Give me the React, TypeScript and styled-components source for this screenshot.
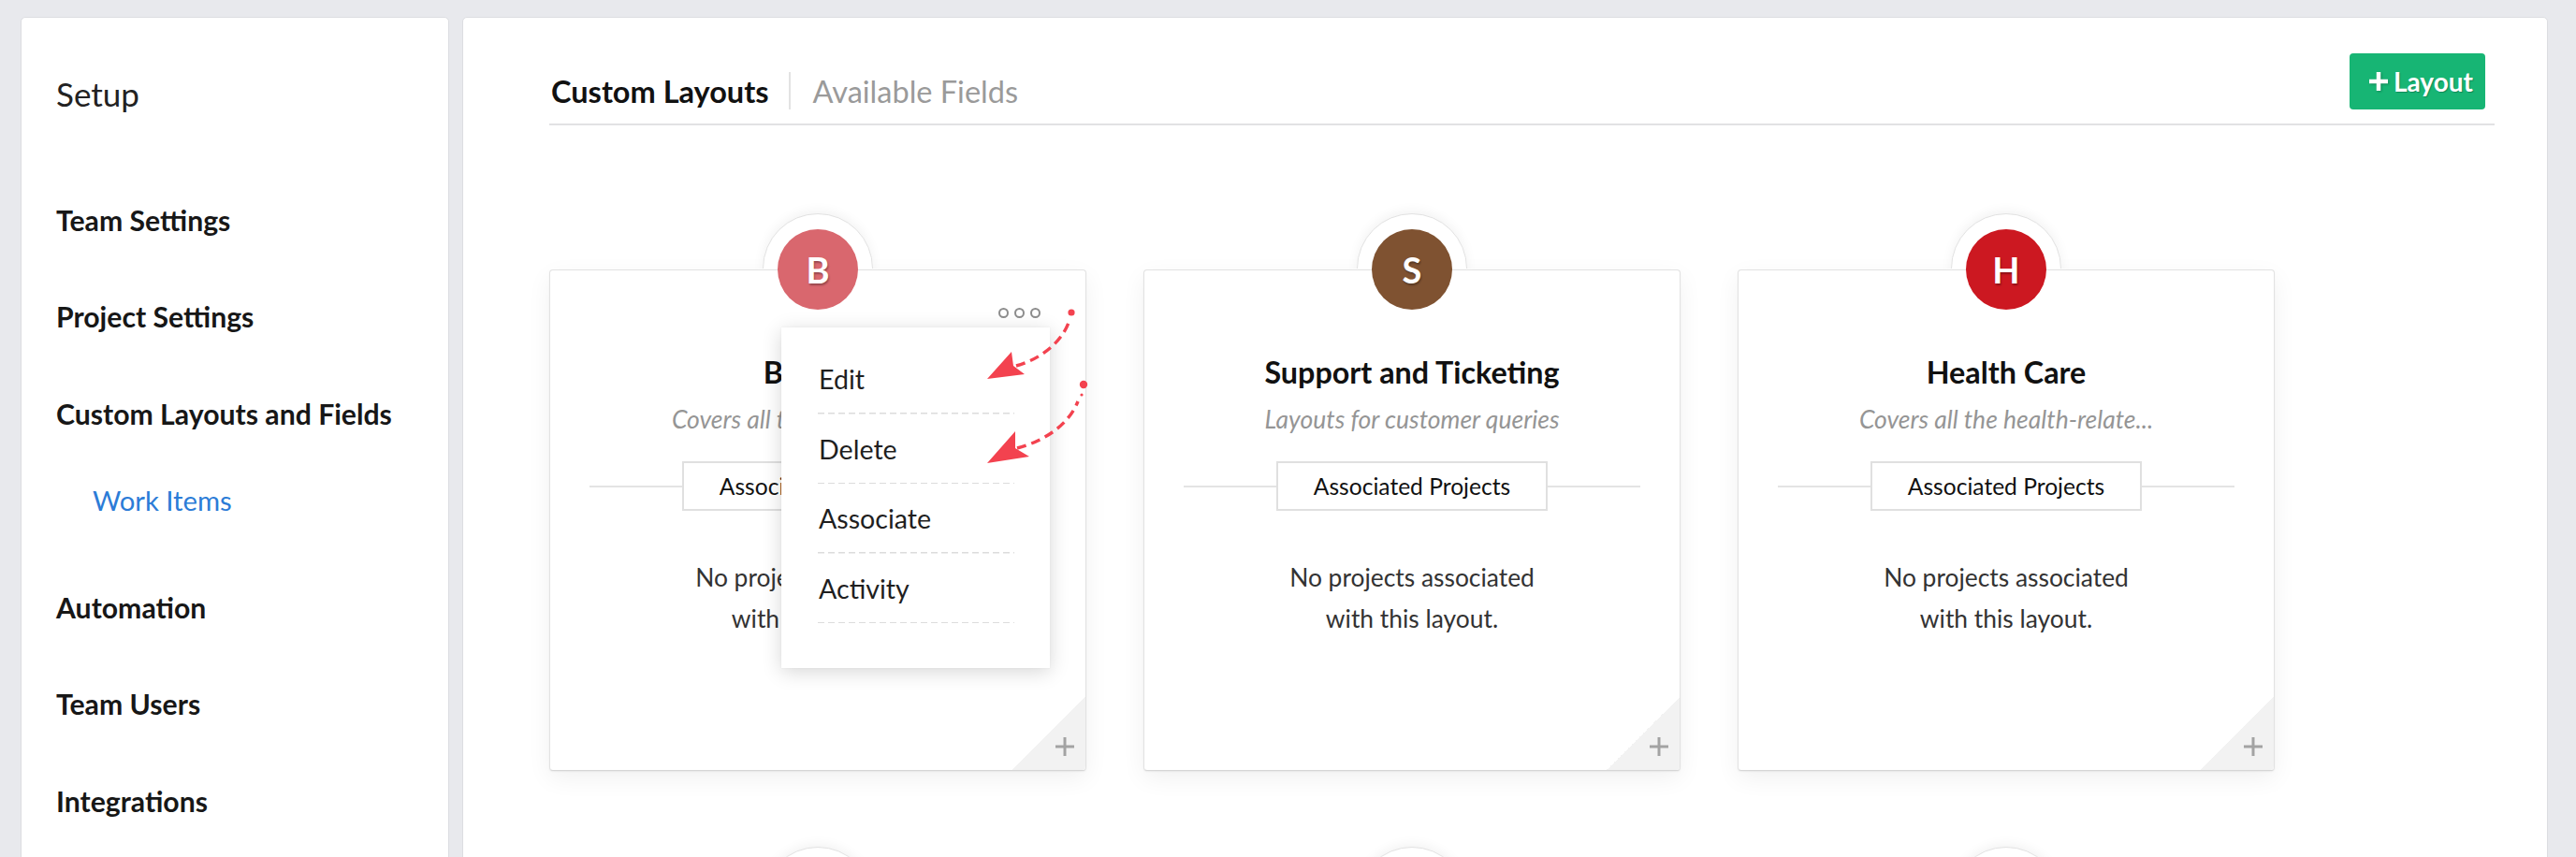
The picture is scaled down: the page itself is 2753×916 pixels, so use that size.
import styled, { createGlobalStyle } from "styled-components";

type Layout = {
  letter: string;
  color: string;
  title: string;
  description: string;
};

const layouts: Layout[] = [
  { letter: "B", color: "#d9676e", title: "Banking", description: "Covers all the bank-related..." },
  { letter: "S", color: "#7f5231", title: "Support and Ticketing", description: "Layouts for customer queries" },
  { letter: "H", color: "#cc1821", title: "Health Care", description: "Covers all the health-relate..." },
  { letter: "D", color: "#3b8ad9", title: "Development", description: "Layouts for software teams" },
  { letter: "M", color: "#6a4fb3", title: "Marketing", description: "Campaigns and launches" },
  { letter: "R", color: "#2aa876", title: "Recruitment", description: "Hiring and onboarding" },
];

const navItems = ["Team Settings", "Project Settings", "Custom Layouts and Fields"];
const navItemsAfter = ["Automation", "Team Users", "Integrations"];
const menuItems = ["Edit", "Delete", "Associate", "Activity"];

//#region CSS styles
const GlobalStyle = createGlobalStyle`
  html, body {
    margin: 0;
    padding: 0;
    overflow: hidden;
  }
  body {
    background: #e8e9ed;
    font-family: Lato, "Open Sans", sans-serif;
    color: #1c1c1c;
  }
  * {
    box-sizing: border-box;
  }
`;

const Page = styled.div`
  display: flex;
  align-items: flex-start;
  gap: 14px;
  height: 916px;
  padding: 18px 30px 0 22px;
  overflow: hidden;
`;

const Panel = styled.div`
  background: #fff;
  border: 1px solid #dcdde1;
  border-radius: 5px;
  min-height: 1100px;
`;

const Sidebar = styled(Panel)`
  width: 458px;
  flex: none;
  padding: 61px 0 0 37px;
`;

const SidebarTitle = styled.h1`
  margin: 0 0 63px;
  font-size: 35px;
  line-height: 40px;
  font-weight: 400;
  color: #222;
`;

const NavList = styled.ul`
  list-style: none;
  margin: 0;
  padding: 0;
`;

const NavItem = styled.li`
  display: flex;
  align-items: center;
  height: 103.5px;
  font-size: 30.2px;
  font-weight: 700;
  color: #171717;
`;

const SubNavItem = styled.li`
  display: flex;
  align-items: center;
  height: 103.5px;
  padding: 0 0 21px 39px;
  font-size: 29.3px;
  font-weight: 400;
  color: #2c7cd7;
`;

const Main = styled(Panel)`
  flex: 1;
  padding: 0 56px 0 92px;
`;

const Header = styled.div`
  display: flex;
  justify-content: space-between;
  align-items: flex-end;
  padding-top: 38px;
  padding-bottom: 15px;
  border-bottom: 2px solid #e2e2e4;
`;

const Tabs = styled.div`
  display: flex;
  align-items: center;
  height: 40px;
`;

const Tab = styled.div<{ $active?: boolean }>`
  height: 40px;
  display: flex;
  align-items: center;
  font-size: 32.5px;
  font-weight: ${(p) => (p.$active ? 700 : 400)};
  color: ${(p) => (p.$active ? "#111" : "#9a9a9a")};
  padding: ${(p) => (p.$active ? "0 21px 0 2px" : "0 0 0 24px")};
  border-left: ${(p) => (p.$active ? "none" : "2px solid #e3e3e3")};
`;

const AddButton = styled.button`
  display: flex;
  align-items: center;
  gap: 6px;
  align-self: flex-start;
  width: 145px;
  height: 60px;
  margin-right: 10px;
  padding: 0 0 0 21px;
  border: none;
  border-radius: 4px;
  background: #17b574;
  color: #fff;
  font-family: inherit;
  font-size: 28px;
  font-weight: 700;
  text-shadow: 1px 1px 1px rgba(0, 0, 0, 0.25);
  svg {
    filter: drop-shadow(1px 1px 1px rgba(0, 0, 0, 0.25));
  }
`;

const CardGrid = styled.div`
  display: grid;
  grid-template-columns: repeat(3, 574px);
  column-gap: 61px;
  row-gap: 141px;
  padding-top: 154px;
`;

const Card = styled.div`
  position: relative;
  width: 574px;
  height: 536px;
  background: #fff;
  border: 1px solid #e2e2e2;
  border-bottom-color: #d6d6d6;
  border-radius: 4px;
  box-shadow: 0 1px 2px rgba(0, 0, 0, 0.06), 0 8px 26px rgba(0, 0, 0, 0.06);
  display: flex;
  flex-direction: column;
  align-items: center;
  padding-top: 89px;
`;

const Ring = styled.div`
  position: absolute;
  top: -61px;
  left: 50%;
  width: 118px;
  height: 118px;
  margin-left: -59px;
  border-radius: 50%;
  background: #fff;
  border: 1px solid #e2e2e2;
  box-shadow: 0 -3px 12px rgba(0, 0, 0, 0.05);
  clip-path: inset(-30px -30px 50% -30px);
`;

const Avatar = styled.div<{ $color: string }>`
  position: absolute;
  top: -44px;
  left: 50%;
  width: 86px;
  height: 86px;
  margin-left: -43px;
  border-radius: 50%;
  background: ${(p) => p.$color};
  display: flex;
  align-items: center;
  justify-content: center;
  color: #fff;
  font-size: 38px;
  font-weight: 700;
  text-shadow: 1px 2px 2px rgba(0, 0, 0, 0.3);
`;

const Title = styled.div`
  font-size: 32.3px;
  line-height: 40px;
  font-weight: 700;
  color: #111;
`;

const Description = styled.div`
  margin-top: 13px;
  font-size: 26.5px;
  line-height: 34px;
  font-style: italic;
  color: #959595;
`;

const AssocRow = styled.div`
  display: flex;
  align-items: center;
  align-self: stretch;
  margin: 28px 42px 0 42px;
  &::before,
  &::after {
    content: "";
    flex: 1;
    height: 2px;
    background: #e4e4e4;
  }
`;

const AssocBox = styled.div`
  width: 290px;
  height: 53px;
  border: 2px solid #e0e0e0;
  display: flex;
  align-items: center;
  justify-content: center;
  font-size: 24.6px;
  color: #111;
`;

const EmptyText = styled.div`
  margin-top: 49px;
  font-size: 26.4px;
  line-height: 44px;
  text-align: center;
  color: #333;
`;

const CornerFold = styled.div`
  position: absolute;
  right: 0;
  bottom: 0;
  width: 78px;
  height: 78px;
  border-bottom-right-radius: 4px;
  background: linear-gradient(135deg, transparent 50%, #f2f2f2 50%);
  display: flex;
  align-items: flex-end;
  justify-content: flex-end;
  padding: 0 12px 15px 0;
`;

const MoreDots = styled.div`
  position: absolute;
  top: 40px;
  right: 48px;
  display: flex;
  gap: 6px;
  span {
    width: 11px;
    height: 11px;
    border: 2px solid #8d8d8d;
    border-radius: 50%;
  }
`;

const Menu = styled.ul`
  position: absolute;
  top: 61px;
  left: 247px;
  width: 287px;
  height: 364px;
  margin: 0;
  padding: 18px 38px 0 39px;
  list-style: none;
  background: #fff;
  box-shadow: 0 4px 20px rgba(0, 0, 0, 0.16), 0 0 2px rgba(0, 0, 0, 0.06);
  z-index: 3;
`;

const MenuItem = styled.li`
  height: 74.5px;
  display: flex;
  align-items: center;
  padding-left: 1px;
  font-size: 28.6px;
  color: #1f1f1f;
  background: repeating-linear-gradient(90deg, #dcdcdc 0 7px, transparent 7px 11px) bottom / 100% 1.5px
    no-repeat;
`;

const Annotation = styled.svg`
  position: absolute;
  left: 454px;
  top: 32px;
  z-index: 4;
  overflow: visible;
`;
//#endregion

function PlusIcon({ size, stroke, color }: { size: number; stroke: number; color: string }) {
  return (
    <svg width={size} height={size} viewBox={`0 0 ${size} ${size}`}>
      <rect x={(size - stroke) / 2} y={0} width={stroke} height={size} fill={color} />
      <rect x={0} y={(size - stroke) / 2} width={size} height={stroke} fill={color} />
    </svg>
  );
}

function Arrows() {
  const red = "#f3424f";
  return (
    <Annotation width={130} height={190} viewBox="0 0 130 190">
      <circle cx={103} cy={13} r={3.6} fill={red} />
      <path d="M44 70 C70 63 94 44 101 21" fill="none" stroke={red} strokeWidth={3.4} strokeDasharray="10 6" />
      <polygon points="13,84 39,55 41,70 53,79" fill={red} />

      <circle cx={116} cy={90} r={4.2} fill={red} />
      <circle cx={114} cy={101} r={1.6} fill={red} />
      <path d="M45 158 C75 150 100 133 110 108" fill="none" stroke={red} strokeWidth={3.4} strokeDasharray="10 6" />
      <polygon points="13,174 43,140 43,158 58,167" fill={red} />
    </Annotation>
  );
}

function LayoutCard({ layout, open }: { layout: Layout; open?: boolean }) {
  return (
    <Card>
      <Ring />
      <Avatar $color={layout.color}>{layout.letter}</Avatar>
      <Title>{layout.title}</Title>
      <Description>{layout.description}</Description>
      <AssocRow>
        <AssocBox>Associated Projects</AssocBox>
      </AssocRow>
      <EmptyText>
        No projects associated
        <br />
        with this layout.
      </EmptyText>
      <CornerFold>
        <PlusIcon size={20} stroke={3} color="#a3a3a3" />
      </CornerFold>
      {open && (
        <>
          <MoreDots>
            <span />
            <span />
            <span />
          </MoreDots>
          <Menu>
            {menuItems.map((item) => (
              <MenuItem key={item}>{item}</MenuItem>
            ))}
          </Menu>
          <Arrows />
        </>
      )}
    </Card>
  );
}

export default function App() {
  return (
    <>
      <GlobalStyle />
      <Page>
        <Sidebar>
          <SidebarTitle>Setup</SidebarTitle>
          <NavList>
            {navItems.map((item) => (
              <NavItem key={item}>{item}</NavItem>
            ))}
            <SubNavItem>Work Items</SubNavItem>
            {navItemsAfter.map((item) => (
              <NavItem key={item}>{item}</NavItem>
            ))}
          </NavList>
        </Sidebar>

        <Main>
          <Header>
            <Tabs>
              <Tab $active>Custom Layouts</Tab>
              <Tab>Available Fields</Tab>
            </Tabs>
            <AddButton>
              <PlusIcon size={20} stroke={4.5} color="#fff" />
              Layout
            </AddButton>
          </Header>

          <CardGrid>
            {layouts.map((layout, i) => (
              <LayoutCard key={layout.title} layout={layout} open={i === 0} />
            ))}
          </CardGrid>
        </Main>
      </Page>
    </>
  );
}
